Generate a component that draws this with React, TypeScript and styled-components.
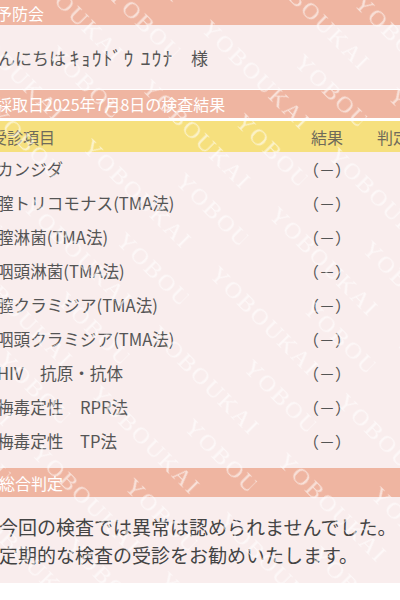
import React from "react";
import styled, { createGlobalStyle } from "styled-components";

const Global = createGlobalStyle`
  html, body { margin: 0; padding: 0; background: #ffffff; overflow: hidden; }
  body { font-family: "Noto Sans CJK JP", "Noto Sans", sans-serif; }
`;

const SALMON = "#efb5a1";
const PINK = "#f9eded";
const YELLOW = "#f6e07e";

const Page = styled.div`
  position: relative;
  width: 482px;
  margin-left: -45px;
`;

const Bar = styled.div<{ $h: number; $pad: number; $mt?: number }>`
  height: ${(p) => p.$h}px;
  margin-top: ${(p) => p.$mt ?? 0}px;
  padding-left: ${(p) => p.$pad}px;
  background: ${SALMON};
  color: #ffffff;
  font-size: 16px;
  display: flex;
  align-items: center;
  white-space: nowrap;
`;

const Greeting = styled.div`
  height: 64px;
  padding-left: 26px;
  background: ${PINK};
  color: #555555;
  font-size: 17px;
  display: flex;
  align-items: center;
  white-space: pre;
`;

const Name = styled.span`
  font-size: 19px;
  letter-spacing: 1.6px;
`;

const Table = styled.div`
  margin-top: 3px;
`;

const Grid = styled.div`
  display: grid;
  grid-template-columns: 1fr 56px 60px;
  column-gap: 22px;
  align-items: center;
  white-space: pre;
`;

const HeadRow = styled(Grid)`
  height: 31px;
  padding-left: 36px;
  background: ${YELLOW};
  color: #6f6a5a;
  font-size: 16px;
`;

const Body = styled.div`
  background: ${PINK};
  padding-bottom: 10px;
`;

const Row = styled(Grid)`
  height: 34px;
  padding-left: 42px;
  color: #555555;
  font-size: 16.6px;
`;

const Center = styled.span`
  text-align: center;
  font-size: 16px;
`;

const Left = styled.span`
  text-align: left;
`;

const Summary = styled.div`
  height: 86px;
  box-sizing: border-box;
  padding: 16px 0 0 44px;
  background: ${PINK};
  color: #444444;
  font-size: 19px;
  line-height: 28px;
  white-space: nowrap;
`;

const Watermark = styled.svg`
  position: absolute;
  left: 0;
  top: 0;
  width: 100%;
  height: 100%;
  pointer-events: none;
`;

const items = [
  "カンジダ",
  "膣トリコモナス(TMA法)",
  "膣淋菌(TMA法)",
  "咽頭淋菌(TMA法)",
  "膣クラミジア(TMA法)",
  "咽頭クラミジア(TMA法)",
  "HIV　抗原・抗体",
  "梅毒定性　RPR法",
  "梅毒定性　TP法",
];

export default function App() {
  return (
    <>
      <Global />
      <Page>
        <Bar $h={25} $pad={9}>性病予防会</Bar>
        <Greeting>
          {"こんにちは "}
          <Name>{"ｷｮｳﾄﾞｳ ﾕｳﾅ"}</Name>
          {"　様"}
        </Greeting>
        <Bar $h={28} $pad={41} $mt={1}>採取日2025年7月8日の検査結果</Bar>
        <Table>
          <HeadRow>
            <Left>受診項目</Left>
            <Center>結果</Center>
            <Left>判定</Left>
          </HeadRow>
          <Body>
            {items.map((it) => (
              <Row key={it}>
                <Left>{it}</Left>
                <Center>（－）</Center>
                <Left></Left>
              </Row>
            ))}
          </Body>
        </Table>
        <Bar $h={29} $pad={44}>総合判定</Bar>
        <Summary>
          今回の検査では異常は認められませんでした。
          <br />
          定期的な検査の受診をお勧めいたします。
        </Summary>
        <Watermark aria-hidden="true">
          <defs>
            <pattern
              id="wm"
              width="180"
              height="84"
              patternUnits="userSpaceOnUse"
              patternTransform="translate(20 0) rotate(45)"
            >
              <text
                x="0"
                y="30"
                fontFamily="'Liberation Serif', 'DejaVu Serif', serif"
                fontSize="24"
                fill="#ffffff"
                fillOpacity="0.6"
                letterSpacing="2"
              >
                YOBOUKAI
              </text>
              <text
                x="90"
                y="72"
                fontFamily="'Liberation Serif', 'DejaVu Serif', serif"
                fontSize="24"
                fill="#ffffff"
                fillOpacity="0.6"
                letterSpacing="2"
              >
                YOBOUKAI
              </text>
            </pattern>
          </defs>
          <rect x="0" y="0" width="100%" height="583" fill="url(#wm)" />
        </Watermark>
      </Page>
    </>
  );
}
